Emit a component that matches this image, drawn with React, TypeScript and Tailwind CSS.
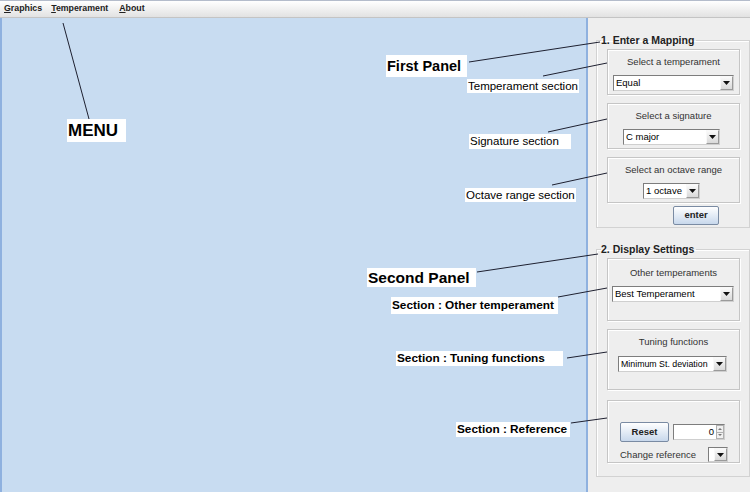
import React from 'react';

const font = "font-['Liberation_Sans',Arial,sans-serif]";

function Arrow() {
  return (
    <div className="flex h-full w-[13px] shrink-0 items-center justify-center border border-[#9a9a9a] border-l-[#f8f8f8] border-t-[#f8f8f8] bg-gradient-to-b from-[#fafafa] to-[#d9d9d9]">
      <svg width="7" height="4" viewBox="0 0 7 4">
        <path d="M0 0h7L3.5 4z" fill="#111" />
      </svg>
    </div>
  );
}

function Combo({ value, className }: { value: string; className: string }) {
  return (
    <div className={`flex h-[16px] items-stretch border border-[#7d7d7d] border-b-[#cfcfcf] border-r-[#cfcfcf] bg-white ${className}`}>
      <span className="flex-1 overflow-hidden whitespace-nowrap pl-[2px] text-[9.5px] leading-[14px] text-black">{value}</span>
      <Arrow />
    </div>
  );
}

function Section({ children, className }: { children: React.ReactNode; className: string }) {
  return (
    <div className={`ml-[6px] w-[133px] border border-[#c5c5c5] shadow-[1px_1px_0_#ffffff,inset_1px_1px_0_#ffffff] ${className}`}>
      {children}
    </div>
  );
}

function Label({ text }: { text: string }) {
  return <div className="text-center text-[9.5px] leading-[12px] text-[#333]">{text}</div>;
}

function JButton({ text, className }: { text: string; className: string }) {
  return (
    <div className={`flex items-center justify-center rounded-[2px] border border-[#7a8ba3] bg-gradient-to-b from-white to-[#c8d8ec] text-[9.5px] font-bold text-[#222] ${className}`}>
      {text}
    </div>
  );
}

function Note({ text, className }: { text: string; className: string }) {
  return <div className={`absolute whitespace-nowrap bg-white text-black ${className}`}>{text}</div>;
}

const lines: [number, number, number, number][] = [
  [63, 23, 89, 119],
  [469, 62, 600, 42],
  [543, 76, 607, 63],
  [548, 132, 607, 119],
  [552, 185, 607, 173],
  [477, 272, 598, 254],
  [558, 297, 607, 288],
  [567, 358, 607, 352],
  [571, 423, 607, 418],
];

export default function App() {
  return (
    <div className={`relative flex h-[492px] w-[750px] flex-col overflow-hidden bg-[#eeeeee] ${font}`}>
      {/* Menu bar */}
      <div className="flex h-[18px] shrink-0 items-center border-b border-t border-b-[#c4c4c4] border-t-[#b4bccb] bg-gradient-to-b from-white to-[#e2e2e2] pl-[4px] text-[8.8px] font-bold text-[#222]">
        <span><span className="underline">G</span>raphics</span>
        <span className="ml-[9px]"><span className="underline">T</span>emperament</span>
        <span className="ml-[11px]"><span className="underline">A</span>bout</span>
      </div>

      <div className="flex flex-1">
        {/* Drawing canvas */}
        <div className="w-[588px] border-l-2 border-r-2 border-[#8fb1df] bg-[#c8dcf1]" />

        {/* Right panel */}
        <div className="w-[162px] pl-[8px] pt-[16px]">
          <fieldset className="w-[154px] border border-[#d2d2d2] pb-[2px] pl-[4px] shadow-[inset_1px_1px_0_#ffffff]">
            <legend className="pr-[2px] text-[10.5px] font-bold leading-[12px] text-[#222]">1. Enter a Mapping</legend>
            <Section className="mt-[3px] h-[46px] pt-[6px]">
              <Label text="Select a temperament" />
              <Combo value="Equal" className="mx-auto mt-[7px] w-[121px]" />
            </Section>
            <Section className="mt-[8px] h-[46px] pt-[6px]">
              <Label text="Select a signature" />
              <Combo value="C major" className="ml-[15px] mt-[7px] w-[97px]" />
            </Section>
            <Section className="mt-[8px] h-[46px] pt-[6px]">
              <Label text="Select an octave range" />
              <Combo value="1 octave" className="ml-[35px] mt-[7px] w-[57px]" />
            </Section>
            <JButton text="enter" className="ml-[72px] mt-[3px] h-[19px] w-[46px]" />
          </fieldset>

          <fieldset className="mt-[15px] w-[154px] border border-[#d2d2d2] pb-[13px] pl-[4px] shadow-[inset_1px_1px_0_#ffffff]">
            <legend className="pr-[2px] text-[10.5px] font-bold leading-[12px] text-[#222]">2. Display Settings</legend>
            <Section className="mt-[3px] h-[63px] pt-[8px]">
              <Label text="Other temperaments" />
              <Combo value="Best Temperament" className="ml-[4px] mt-[7px] w-[122px]" />
            </Section>
            <Section className="mt-[8px] h-[61px] pt-[6px]">
              <Label text="Tuning functions" />
              <div className="ml-[10px] mt-[8px] flex h-[16px] w-[109px] items-stretch border border-[#7d7d7d] border-b-[#cfcfcf] border-r-[#cfcfcf] bg-white">
                <span className="flex-1 overflow-hidden whitespace-nowrap pl-[2px] text-[8.8px] leading-[14px] text-black">Minimum St. deviation</span>
                <Arrow />
              </div>
            </Section>
            <Section className="mt-[10px] h-[63px] pl-[12px] pt-[21px]">
              <div className="flex items-center gap-[4px]">
                <JButton text="Reset" className="h-[20px] w-[49px]" />
                <div className="flex h-[16px] w-[52px] border border-[#7d7d7d] border-b-[#cfcfcf] border-r-[#cfcfcf] bg-white">
                  <span className="flex-1 pr-[2px] text-right text-[9.5px] leading-[14px] text-black">0</span>
                  <div className="flex w-[8px] flex-col">
                    <div className="flex flex-1 items-center justify-center border border-[#b0b0b0] bg-[#f0f0f0]">
                      <svg width="4" height="2" viewBox="0 0 4 2"><path d="M0 2h4L2 0z" fill="#777" /></svg>
                    </div>
                    <div className="flex flex-1 items-center justify-center border border-t-0 border-[#b0b0b0] bg-[#f0f0f0]">
                      <svg width="4" height="2" viewBox="0 0 4 2"><path d="M0 0h4L2 2z" fill="#777" /></svg>
                    </div>
                  </div>
                </div>
              </div>
              <div className="mt-[5px] flex items-center">
                <span className="text-[9.5px] leading-[12px] text-[#333]">Change reference</span>
                <div className="ml-[12px] flex h-[15px] w-[20px] border border-[#7d7d7d] border-b-[#cfcfcf] border-r-[#cfcfcf] bg-white pl-[5px]">
                  <Arrow />
                </div>
              </div>
            </Section>
          </fieldset>
        </div>
      </div>

      {/* Annotation lines */}
      <svg className="pointer-events-none absolute left-0 top-0" width="750" height="492">
        {lines.map(([x1, y1, x2, y2], i) => (
          <line key={i} x1={x1} y1={y1} x2={x2} y2={y2} stroke="#1e2030" strokeWidth="1" />
        ))}
      </svg>

      {/* Annotation labels */}
      <Note text="MENU" className="left-[67px] top-[119px] h-[23px] w-[59px] pl-[1px] text-[17px] font-bold leading-[23px]" />
      <Note text="First Panel" className="left-[386px] top-[55px] h-[22px] w-[81px] pl-[1px] text-[14.5px] font-bold leading-[22px]" />
      <Note text="Temperament section" className="left-[467px] top-[79px] h-[14px] w-[112px] pl-[1px] text-[11.5px] leading-[14px]" />
      <Note text="Signature section" className="left-[469px] top-[134px] h-[15px] w-[102px] pl-[1px] text-[11.5px] leading-[15px]" />
      <Note text="Octave range section" className="left-[465px] top-[188px] h-[14px] w-[111px] pl-[1px] text-[11.5px] leading-[14px]" />
      <Note text="Second Panel" className="left-[367px] top-[268px] h-[19px] w-[109px] pl-[1px] text-[15.5px] font-bold leading-[19px]" />
      <Note text="Section : Other temperament" className="left-[391px] top-[297px] h-[17px] w-[167px] pl-[1px] text-[11.8px] font-bold leading-[17px]" />
      <Note text="Section : Tuning functions" className="left-[396px] top-[351px] h-[15px] w-[167px] pl-[1px] text-[11.8px] font-bold leading-[15px]" />
      <Note text="Section : Reference" className="left-[456px] top-[422px] h-[15px] w-[114px] pl-[1px] text-[11.8px] font-bold leading-[15px]" />
    </div>
  );
}
